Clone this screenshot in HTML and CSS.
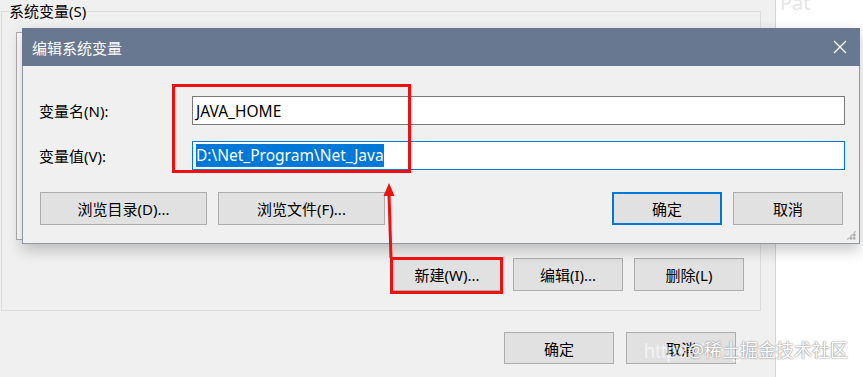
FILE: index.html
```html
<!DOCTYPE html>
<html lang="zh-CN">
<head>
    <meta charset="UTF-8">
    <title>编辑系统变量</title>
    <link rel="stylesheet" href="styles.css">
</head>
<body>
    <div class="screen">
        <!-- Environment variables window (behind) -->
        <div class="env-window">
            <fieldset class="group">
                <legend>系统变量(S)</legend>
                <div class="var-list"></div>
                <div class="btn-row">
                    <button class="btn">新建(W)...</button>
                    <button class="btn">编辑(I)...</button>
                    <button class="btn">删除(L)</button>
                </div>
            </fieldset>
            <div class="btn-row footer">
                <button class="btn">确定</button>
                <button class="btn">取消</button>
            </div>
        </div>
        <div class="side">
            <span class="side-text">Pat</span>
        </div>

        <!-- Edit dialog -->
        <div class="dialog">
            <div class="title-bar">
                <span>编辑系统变量</span>
                <svg class="close" width="14" height="14" viewBox="0 0 14 14">
                    <path d="M1 1 L13 13 M13 1 L1 13" stroke="#fff" stroke-width="1.3" fill="none"/>
                </svg>
            </div>
            <div class="dialog-body">
                <div class="fields">
                    <label for="var-name">变量名(N):</label>
                    <div class="input" id="var-name">JAVA_HOME</div>
                    <label for="var-value">变量值(V):</label>
                    <div class="input focused" id="var-value"><span class="selected">D:\Net_Program\Net_Java</span></div>
                </div>
                <div class="dialog-buttons">
                    <button class="btn wide">浏览目录(D)...</button>
                    <button class="btn wide">浏览文件(F)...</button>
                    <span class="spacer"></span>
                    <button class="btn default">确定</button>
                    <button class="btn">取消</button>
                </div>
            </div>
            <div class="grip"></div>
        </div>

        <!-- Annotations -->
        <div class="mark mark-fields"></div>
        <div class="mark mark-new"></div>
        <svg class="arrow" width="20" height="80" viewBox="0 0 20 80">
            <path d="M9 12 L11 76" stroke="#ee1111" stroke-width="3" fill="none"/>
            <polygon points="3.5,14 9,1 14.5,14" fill="#ee1111"/>
        </svg>

        <div class="watermark">
            <span class="wm-url">https://blog.csdn.net/qq_43763494</span>
            <span class="wm-brand">@稀土掘金技术社区</span>
        </div>
    </div>
</body>
</html>
```

FILE: styles.css
```css
body {
    margin: 0;
    background-color: #fff;
    font-family: "Noto Sans", "Noto Sans CJK SC", sans-serif;
    font-size: 15px;
    color: #000;
}
.screen {
    position: relative;
    width: 863px;
    height: 377px;
    overflow: hidden;
    display: flex;
}
.env-window {
    width: 776px;
    height: 377px;
    padding: 1px 0 0 1px;
    box-sizing: border-box;
    background-color: #f0f0f0;
    border-right: 1px solid #d4d4d4;
}
.group {
    width: 760px;
    box-sizing: border-box;
    margin: 0;
    padding: 11px 16px 19px 14px;
    border: 1px solid #dcdcdc;
}
.group legend {
    margin-left: -7px;
    padding: 0;
    line-height: 20px;
}
.var-list {
    height: 206px;
    border: 1px solid #adadad;
    background-color: #fff;
}
.btn-row {
    display: flex;
    justify-content: flex-end;
    gap: 11px;
    margin-top: 18px;
}
.footer {
    margin-top: 21px;
    padding-right: 39px;
    gap: 12px;
}
.btn {
    width: 110px;
    height: 33px;
    background-color: #e1e1e1;
    border: 1px solid #adadad;
    font-family: inherit;
    font-size: 15px;
    color: #000;
    padding: 0;
}
.footer .btn {
    height: 32px;
}
.side {
    flex: 1;
    background-color: #fff;
}
.side-text {
    display: block;
    margin: -9px 0 0 4px;
    font-size: 20px;
    line-height: 24px;
    color: #e6e6e6;
}

/* dialog */
.dialog {
    position: absolute;
    left: 22px;
    top: 28px;
    width: 838px;
    box-sizing: border-box;
    background-color: #f0f0f0;
    border: 1px solid #8f99a6;
    border-top: none;
    box-shadow: 0 6px 14px rgba(0, 0, 0, 0.22);
}
.title-bar {
    height: 38px;
    background-color: #687890;
    color: #fff;
    display: flex;
    align-items: center;
    justify-content: space-between;
    padding: 0 13px 0 10px;
    margin: 0 -1px;
}
.dialog-body {
    padding: 30px 14px 18px 16px;
}
.fields {
    display: grid;
    grid-template-columns: 153px 1fr;
    row-gap: 16px;
    align-items: center;
}
.input {
    height: 29px;
    box-sizing: border-box;
    border: 1px solid #7a7a7a;
    background-color: #fff;
    padding: 0 3px;
    display: flex;
    align-items: center;
    font-size: 15.5px;
}
.input.focused {
    border-color: #0078d7;
}
.selected {
    background-color: #0078d7;
    color: #fff;
    line-height: 23px;
}
.dialog-buttons {
    display: flex;
    gap: 11px;
    margin-top: 22px;
    padding-left: 1px;
    padding-right: 2px;
}
.btn.wide {
    width: 167px;
}
.spacer {
    flex: 1;
}
.btn.default {
    border: 2px solid #0078d7;
}
.grip {
    position: absolute;
    right: 3px;
    bottom: 3px;
    width: 10px;
    height: 10px;
    background: radial-gradient(circle, #a8a8a8 1.1px, transparent 1.6px) 0 0 / 3.3px 3.3px;
    clip-path: polygon(100% 0, 100% 100%, 0 100%);
}

/* annotations */
.mark {
    position: absolute;
    border: 3px solid #ee1111;
    box-sizing: border-box;
}
.mark-fields {
    left: 172px;
    top: 84px;
    width: 239px;
    height: 89px;
}
.mark-new {
    left: 390px;
    top: 257px;
    width: 113px;
    height: 37px;
}
.arrow {
    position: absolute;
    left: 380px;
    top: 182px;
}
.watermark {
    position: absolute;
    left: 644px;
    top: 334px;
    width: 215px;
    height: 30px;
}
.wm-url {
    position: absolute;
    left: 0;
    top: 6px;
    font-family: "Liberation Sans", sans-serif;
    font-size: 20px;
    color: rgba(255, 255, 255, 0.6);
    white-space: nowrap;
    overflow: hidden;
    width: 210px;
}
.wm-brand {
    position: absolute;
    right: 11px;
    top: 2px;
    font-size: 18px;
    color: #fff;
    text-shadow: 0 0 2px #8a8a8a, 0 0 1px #8a8a8a;
    white-space: nowrap;
}
```
